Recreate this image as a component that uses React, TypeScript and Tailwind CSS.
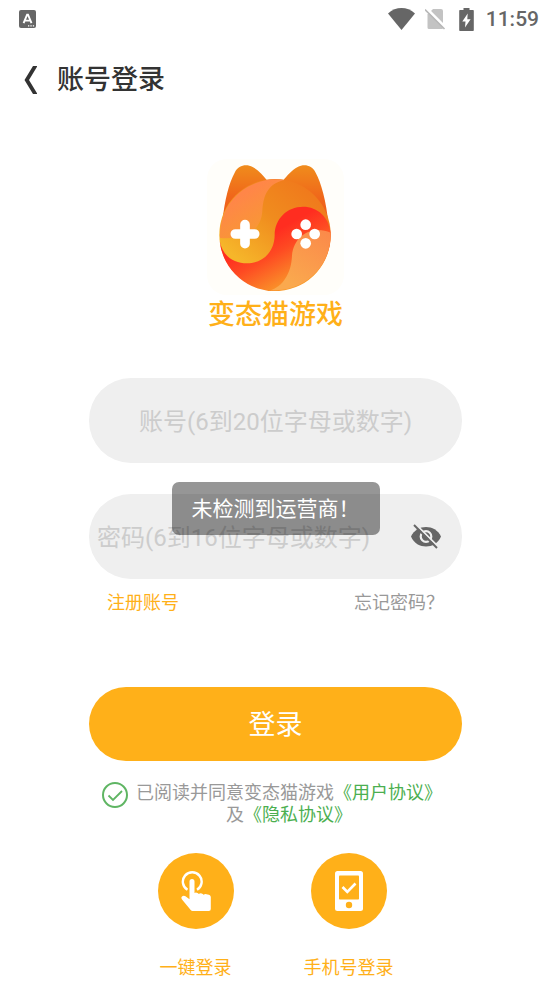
import React, { useState } from 'react';

const StatusBar: React.FC = () => (
  <div className="flex h-[38px] items-center justify-between pl-[19px] pr-3 text-[#666666]">
    <svg className="h-[18px] w-[17px]" viewBox="0 0 17 18" aria-hidden="true">
      <rect width="17" height="18" rx="2" fill="currentColor" />
      <path d="M4.6 13.2 8.1 4.6h.9l3.5 8.6M6 10.6h5" fill="none" stroke="#fff" strokeWidth="1.9" />
      <path d="M9 15.8h1.3M11.4 15.8h1.3M13.8 15.8h1.3" stroke="#fff" strokeWidth="1.2" />
    </svg>
    <div className="flex items-center">
      <svg className="h-[22px] w-[27px]" viewBox="0 0 27 22" fill="currentColor" aria-hidden="true">
        <path d="M0 5.5C8-1.7 19-1.7 27 5.5L13.5 22Z" />
      </svg>
      <svg className="ml-[10px] h-[22px] w-[21px]" viewBox="0 0 21 22" aria-hidden="true">
        <path d="M8 1h8q2 0 2 2v17q0 1-1 1H4q-1.5 0-1.5-1.5V6.5Z" fill="#c3c3c3" />
        <path d="M1 0 21 20" stroke="#fff" strokeWidth="3" />
        <path d="M0 1.500 19.500 21" stroke="#b8b8b8" strokeWidth="1.600" />
      </svg>
      <svg className="ml-[13px] h-[23px] w-[15px]" viewBox="0 0 15 23" aria-hidden="true">
        <path d="M4.5 0h6v2H14q.8 0 .8.8v19.400q0 .8-.8.800H1q-.8 0-.8-.8V2.800Q.2 2 1 2h3.500Z" fill="currentColor" />
        <path d="M8.700 5.500 3.300 13.500h3.200L6 19.500l5.600-8.200H8.300Z" fill="#fff" />
      </svg>
      <span className="ml-3 text-[21px] font-medium leading-6">11:59</span>
    </div>
  </div>
);

const CatLogo: React.FC = () => (
  <svg className="h-[136px] w-[137px]" viewBox="37 25 411 408" aria-hidden="true">
    <defs>
      <linearGradient id="ear" x1="0" y1="0" x2="0" y2="1">
        <stop offset="0" stopColor="#f08c1c" />
        <stop offset="0.550" stopColor="#f0661a" />
        <stop offset="1" stopColor="#ee5a1c" />
      </linearGradient>
      <linearGradient id="gold" gradientUnits="userSpaceOnUse" x1="330" y1="110" x2="140" y2="335">
        <stop offset="0" stopColor="#f07a1c" />
        <stop offset="0.450" stopColor="#f08c1e" />
        <stop offset="1" stopColor="#f6b62a" />
      </linearGradient>
      <linearGradient id="red" gradientUnits="userSpaceOnUse" x1="200" y1="265" x2="280" y2="410">
        <stop offset="0" stopColor="#ff2d20" />
        <stop offset="0.350" stopColor="#fe4a22" />
        <stop offset="1" stopColor="#f99a2a" />
      </linearGradient>
      <linearGradient id="peach" gradientUnits="userSpaceOnUse" x1="130" y1="140" x2="200" y2="250">
        <stop offset="0" stopColor="#ff8648" />
        <stop offset="1" stopColor="#f79a32" />
      </linearGradient>
      <linearGradient id="sand" gradientUnits="userSpaceOnUse" x1="390" y1="240" x2="290" y2="400">
        <stop offset="0" stopColor="#fb8a4a" />
        <stop offset="1" stopColor="#faa94e" />
      </linearGradient>
    </defs>
    <rect x="37" y="25" width="411" height="408" rx="60" fill="#fffefa" />
    <path d="M83 215C90 145 104 95 120 66C131 44 154 39 174 49C192 58 206 76 218 90L190 190Z" fill="url(#ear)" />
    <path d="M402 225C395 150 379 95 363 66C352 44 329 39 309 49C291 58 277 76 265 90L300 190Z" fill="url(#ear)" />
    <circle cx="241" cy="252" r="167" fill="url(#gold)" />
    <path d="M268 88C212 102 206 145 203 180C200 228 170 268 76 262A167 167 0 0 1 268 88Z" fill="url(#peach)" />
    <path d="M75 270C84 318 118 338 157 338C207 338 240 300 240 253C240 205 277 168 325 168C370 168 402 200 408 245A167 167 0 0 1 75 270Z" fill="url(#red)" />
    <path d="M408 246C355 222 297 252 292 315C290 370 262 408 228 418.500A167 167 0 0 0 408 246Z" fill="url(#sand)" />
    <path d="M151 222V279M122 250H180" stroke="#fff" strokeWidth="29" strokeLinecap="round" />
    <g fill="#fff">
      <circle cx="333" cy="222" r="16" />
      <circle cx="306" cy="250" r="16" />
      <circle cx="360" cy="250" r="16" />
      <circle cx="333" cy="278" r="16" />
    </g>
  </svg>
);

const EyeOffIcon: React.FC = () => (
  <svg className="h-[26px] w-[30px]" viewBox="0 0 30 26" fill="none" aria-hidden="true">
    <path d="M0 12.500C3 6 9 3 15 3s12 3 15 9.500c-3 7-9 10-15 10S3 19.500 0 12.500Z" fill="#666666" />
    <circle cx="15" cy="12.500" r="5.300" stroke="#efefef" strokeWidth="2.200" />
    <path d="M4.500 0 28 23.500" stroke="#efefef" strokeWidth="1.800" />
    <path d="M3 1 26 24" stroke="#666666" strokeWidth="2" />
  </svg>
);

const TouchIcon: React.FC = () => (
  <svg className="h-10 w-[30px]" viewBox="0 0 30 40" aria-hidden="true">
    <path d="M6.500 18.800A9.400 9.400 0 1 1 16 18.800" fill="none" stroke="#fff" strokeWidth="2.400" />
    <path d="M8.500 10.500a2.500 2.500 0 0 1 5 0V22q1.300-1 3 0 1 .6 1.300 1 1.700-1.700 4 0 .5.4.8.8 1.700-1.500 4-.2 2.900 0 3.200 2.500V38q0 2-2 2H11.500q-1 0-1.800-1L1 28.500q-1.300-1.800 0-3 1.500-1.400 3.500-.3l4 3Z" fill="#fff" />
  </svg>
);

const PhoneIcon: React.FC = () => (
  <svg className="h-10 w-7" viewBox="0 0 28 40" aria-hidden="true">
    <rect width="28" height="40" rx="2.500" fill="#fff" />
    <rect x="4" y="4.500" width="20" height="24" rx="0.800" fill="#ffb019" />
    <path d="M7.500 16 12.300 21 20.500 12.500" fill="none" stroke="#fff" strokeWidth="2.600" />
    <circle cx="14" cy="34" r="3.200" fill="#ffb019" />
  </svg>
);

interface QuickLoginProps {
  label: string;
  icon: React.ReactNode;
}

const QuickLogin: React.FC<QuickLoginProps> = ({ label, icon }) => (
  <button type="button" className="flex flex-col items-center text-lg leading-6 text-[#ffb019]">
    <span className="mb-[27px] flex h-[76px] w-[76px] items-center justify-center rounded-full bg-[#ffb019]">{icon}</span>
    {label}
  </button>
);

const App: React.FC = () => {
  const [visible, setVisible] = useState(false);
  const [agreed, setAgreed] = useState(true);

  return (
    <div lang="zh-CN" className="min-h-screen bg-white font-['Roboto','Noto_Sans_CJK_SC',sans-serif]">
      <StatusBar />

      {/* Header */}
      <header className="flex h-[84px] items-center gap-5 pl-6 text-[#333333]">
        <button type="button" aria-label="返回">
          <svg className="h-7 w-[13px]" viewBox="0 0 13 28" aria-hidden="true">
            <path d="M9 0h4.500L5 14l8.500 14H9L.5 14Z" fill="currentColor" />
          </svg>
        </button>
        <h1 className="text-[27px] font-medium leading-10">账号登录</h1>
      </header>

      <main className="flex flex-col px-[89px] pt-[37px]">
        <div className="flex flex-col items-center">
          <CatLogo />
          <p className="text-[27px] font-medium leading-10 text-[#ffb019]">变态猫游戏</p>
        </div>

        <form className="mt-[43px] flex flex-col" onSubmit={e => e.preventDefault()}>
          <input
            type="text" aria-label="账号" placeholder="账号(6到20位字母或数字)"
            className="h-[85px] w-full rounded-[42px] bg-[#efefef] px-2 pt-0.5 text-center text-2xl text-[#333333] outline-none placeholder:text-[#cccccc]"
          />

          <div className="relative mt-[31px] flex h-[85px] items-center rounded-[42px] bg-[#efefef] pl-2 pr-[21px]">
            <input
              type={visible ? 'text' : 'password'} aria-label="密码" placeholder="密码(6到16位字母或数字)"
              className="h-full min-w-0 flex-1 bg-transparent pt-0.5 text-2xl text-[#333333] outline-none placeholder:text-[#cccccc]"
            />
            <button type="button" aria-label="显示密码" onClick={() => setVisible(!visible)}>
              <EyeOffIcon />
            </button>

            {/* Toast */}
            <div role="status" className="absolute -top-3 left-1/2 -translate-x-1/2 whitespace-nowrap rounded-[7px] bg-black/41 px-5 pt-3 pb-2.5 text-[21px] leading-[31px] text-white">
              未检测到运营商！
            </div>
          </div>

          <div className="mt-3 flex justify-between px-[18px] text-lg leading-6">
            <a href="#register" className="text-[#ffb019]">注册账号</a>
            <a href="#forgot" className="text-[#999999]">忘记密码？</a>
          </div>

          <button type="submit" className="mt-[72px] h-[74px] w-full rounded-full bg-[#ffb019] pt-0.5 text-[27px] text-white">
            登录
          </button>

          {/* Agreement */}
          <div className="mt-[21px] flex items-start gap-2 pl-[13px]">
            <span className="relative h-[26px] w-[26px] shrink-0">
              <input
                id="agree" type="checkbox" checked={agreed} onChange={e => setAgreed(e.target.checked)}
                className="block h-full w-full appearance-none rounded-full border-2 border-[#5fb563]"
              />
              {agreed && (
                <svg className="pointer-events-none absolute inset-0" viewBox="0 0 26 26" aria-hidden="true">
                  <path d="M6.500 13.500 11 18 20 9" fill="none" stroke="#5fb563" strokeWidth="1.800" />
                </svg>
              )}
            </span>
            <label htmlFor="agree" className="text-center text-lg leading-[22px] text-[#999999]">
              已阅读并同意变态猫游戏<a href="#terms" className="text-[#4caf50]">《用户协议》</a>
              <br />
              及<a href="#privacy" className="text-[#4caf50]">《隐私协议》</a>
            </label>
          </div>
        </form>

        <div className="mt-[27px] flex justify-center gap-[70px]">
          <QuickLogin label="一键登录" icon={<TouchIcon />} />
          <QuickLogin label="手机号登录" icon={<PhoneIcon />} />
        </div>
      </main>
    </div>
  );
};

export default App;
